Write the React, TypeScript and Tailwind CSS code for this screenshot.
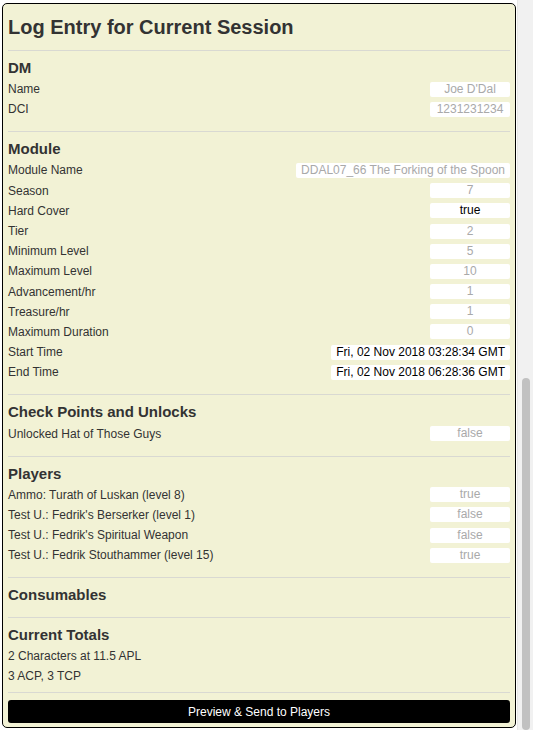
import React from "react";

type Row = { label: string; value: string; active?: boolean };

const font = { fontFamily: '"Liberation Sans", Arial, Helvetica, sans-serif' };

function Field({ value, active }: { value: string; active?: boolean }) {
  return (
    <span
      className={`inline-block min-w-[80px] h-[15px] leading-[15px] px-[5px] text-center bg-white rounded-[2px] text-[12px] ${
        active ? "text-black" : "text-[#a9a9a9]"
      }`}
    >
      {value}
    </span>
  );
}

function Section({
  title,
  rows = [],
  lines = [],
  pb = "pb-[12px]",
}: {
  title: string;
  rows?: Row[];
  lines?: string[];
  pb?: string;
}) {
  return (
    <div className={`border-t border-[#d9d9d2] pt-[6px] ${pb}`}>
      <div className="text-[15px] font-bold leading-[22px] text-[#333]">{title}</div>
      {rows.map((r) => (
        <div key={r.label} className="h-[20.2px] flex items-center justify-between text-[12px] text-[#333]">
          <span>{r.label}</span>
          <Field value={r.value} active={r.active} />
        </div>
      ))}
      {lines.map((l) => (
        <div key={l} className="h-[19.5px] flex items-center text-[12px] text-[#333]">
          {l}
        </div>
      ))}
    </div>
  );
}

export default function App() {
  return (
    <div className="w-[533px] h-[730px] flex overflow-hidden bg-white" style={font}>
      <div className="w-[517px] pl-[2px] pt-[3px]">
        <div className="w-[514px] border border-black rounded-[5px] bg-[#f2f2d5] pl-[5px] pr-[5px] pb-[4px]">
          <div className="h-[46px] flex items-center text-[20px] font-bold text-[#333]">
            Log Entry for Current Session
          </div>
          <Section
            title="DM"
            rows={[
              { label: "Name", value: "Joe D'Dal" },
              { label: "DCI", value: "1231231234" },
            ]}
          />
          <Section
            title="Module"
            rows={[
              { label: "Module Name", value: "DDAL07_66 The Forking of the Spoon" },
              { label: "Season", value: "7" },
              { label: "Hard Cover", value: "true", active: true },
              { label: "Tier", value: "2" },
              { label: "Minimum Level", value: "5" },
              { label: "Maximum Level", value: "10" },
              { label: "Advancement/hr", value: "1" },
              { label: "Treasure/hr", value: "1" },
              { label: "Maximum Duration", value: "0" },
              { label: "Start Time", value: "Fri, 02 Nov 2018 03:28:34 GMT", active: true },
              { label: "End Time", value: "Fri, 02 Nov 2018 06:28:36 GMT", active: true },
            ]}
          />
          <Section
            title="Check Points and Unlocks"
            rows={[{ label: "Unlocked Hat of Those Guys", value: "false" }]}
          />
          <Section
            title="Players"
            rows={[
              { label: "Ammo: Turath of Luskan (level 8)", value: "true" },
              { label: "Test U.: Fedrik's Berserker (level 1)", value: "false" },
              { label: "Test U.: Fedrik's Spiritual Weapon", value: "false" },
              { label: "Test U.: Fedrik Stouthammer (level 15)", value: "true" },
            ]}
          />
          <Section title="Consumables" pb="pb-[11px]" />
          <Section
            title="Current Totals"
            lines={["2 Characters at 11.5 APL", "3 ACP, 3 TCP"]}
            pb="pb-[7px]"
          />
          <div className="border-t border-[#d9d9d2] pt-[7px]">
            <button className="w-full h-[23px] bg-black text-white text-[12px] rounded-[3px] flex items-center justify-center">
              Preview &amp; Send to Players
            </button>
          </div>
        </div>
      </div>
      <div className="w-[16px] h-full bg-[#f1f1f1] border-l border-[#e6e6e6] flex flex-col items-center">
        <div className="h-[378px] shrink-0" />
        <div className="w-[8px] flex-1 bg-[#c1c1c1] rounded-[4px]" />
      </div>
    </div>
  );
}
